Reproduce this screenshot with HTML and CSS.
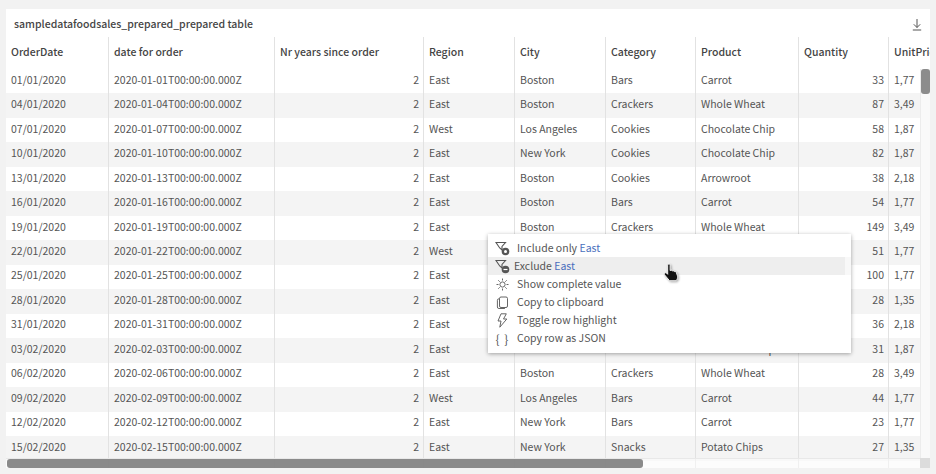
FILE: index.html
```
<!DOCTYPE html>
<html lang="en">
<head>
<meta charset="utf-8">
<title>sampledatafoodsales_prepared_prepared table</title>
<link rel="stylesheet" href="styles.css">
</head>
<body>
<section class="card">
  <header class="card-head">
    <h1 class="card-title">sampledatafoodsales_prepared_prepared table</h1>
    <svg class="download" viewBox="0 0 12 13" width="12" height="13"><path d="M6 1v8.500M2.800 6.300 6 9.500l3.200-3.200M1.800 12h8.400" fill="none" stroke="#555" stroke-width="1"/></svg>
  </header>
  <div class="table-wrap">
    <table class="data">
      <colgroup><col class="c1"><col class="c2"><col class="c3"><col class="c4"><col class="c5"><col class="c6"><col class="c7"><col class="c8"><col class="c9"></colgroup>
      <thead><tr><th>OrderDate</th><th>date for order</th><th>Nr years since order</th><th>Region</th><th>City</th><th>Category</th><th>Product</th><th>Quantity</th><th>UnitPrice</th></tr></thead>
      <tbody>
        <tr><td>01/01/2020</td><td>2020-01-01T00:00:00.000Z</td><td class="n">2</td><td>East</td><td>Boston</td><td>Bars</td><td>Carrot</td><td class="n">33</td><td>1,77</td></tr>
        <tr><td>04/01/2020</td><td>2020-01-04T00:00:00.000Z</td><td class="n">2</td><td>East</td><td>Boston</td><td>Crackers</td><td>Whole Wheat</td><td class="n">87</td><td>3,49</td></tr>
        <tr><td>07/01/2020</td><td>2020-01-07T00:00:00.000Z</td><td class="n">2</td><td>West</td><td>Los Angeles</td><td>Cookies</td><td>Chocolate Chip</td><td class="n">58</td><td>1,87</td></tr>
        <tr><td>10/01/2020</td><td>2020-01-10T00:00:00.000Z</td><td class="n">2</td><td>East</td><td>New York</td><td>Cookies</td><td>Chocolate Chip</td><td class="n">82</td><td>1,87</td></tr>
        <tr><td>13/01/2020</td><td>2020-01-13T00:00:00.000Z</td><td class="n">2</td><td>East</td><td>Boston</td><td>Cookies</td><td>Arrowroot</td><td class="n">38</td><td>2,18</td></tr>
        <tr><td>16/01/2020</td><td>2020-01-16T00:00:00.000Z</td><td class="n">2</td><td>East</td><td>Boston</td><td>Bars</td><td>Carrot</td><td class="n">54</td><td>1,77</td></tr>
        <tr><td>19/01/2020</td><td>2020-01-19T00:00:00.000Z</td><td class="n">2</td><td>East</td><td>Boston</td><td>Crackers</td><td>Whole Wheat</td><td class="n">149</td><td>3,49</td></tr>
        <tr><td>22/01/2020</td><td>2020-01-22T00:00:00.000Z</td><td class="n">2</td><td>West</td><td>Los Angeles</td><td>Bars</td><td>Carrot</td><td class="n">51</td><td>1,77</td></tr>
        <tr><td>25/01/2020</td><td>2020-01-25T00:00:00.000Z</td><td class="n">2</td><td>East</td><td>New York</td><td>Bars</td><td>Carrot</td><td class="n">100</td><td>1,77</td></tr>
        <tr><td>28/01/2020</td><td>2020-01-28T00:00:00.000Z</td><td class="n">2</td><td>East</td><td>New York</td><td>Snacks</td><td>Potato Chips</td><td class="n">28</td><td>1,35</td></tr>
        <tr><td>31/01/2020</td><td>2020-01-31T00:00:00.000Z</td><td class="n">2</td><td>East</td><td>Boston</td><td>Cookies</td><td>Arrowroot</td><td class="n">36</td><td>2,18</td></tr>
        <tr><td>03/02/2020</td><td>2020-02-03T00:00:00.000Z</td><td class="n">2</td><td>East</td><td>New York</td><td>Cookies</td><td>Chocolate Chip</td><td class="n">31</td><td>1,87</td></tr>
        <tr><td>06/02/2020</td><td>2020-02-06T00:00:00.000Z</td><td class="n">2</td><td>East</td><td>Boston</td><td>Crackers</td><td>Whole Wheat</td><td class="n">28</td><td>3,49</td></tr>
        <tr><td>09/02/2020</td><td>2020-02-09T00:00:00.000Z</td><td class="n">2</td><td>West</td><td>Los Angeles</td><td>Bars</td><td>Carrot</td><td class="n">44</td><td>1,77</td></tr>
        <tr><td>12/02/2020</td><td>2020-02-12T00:00:00.000Z</td><td class="n">2</td><td>East</td><td>New York</td><td>Bars</td><td>Carrot</td><td class="n">23</td><td>1,77</td></tr>
        <tr><td>15/02/2020</td><td>2020-02-15T00:00:00.000Z</td><td class="n">2</td><td>East</td><td>New York</td><td>Snacks</td><td>Potato Chips</td><td class="n">27</td><td>1,35</td></tr>
        <tr class="filler"><td></td><td></td><td></td><td></td><td></td><td></td><td></td><td></td><td></td></tr>
      </tbody>
    </table>
    <div class="vtrack"><div class="vthumb"></div></div>
    <div class="htrack"><div class="hthumb"></div></div>
    <div class="corner"></div>
  </div>
</section>

<ul class="menu">
  <li class="item">
    <svg class="ico" viewBox="0 0 15 15"><path d="M1 1.500h9.500L7 5.500v3.500L4.700 7Z" fill="none" stroke="#555" stroke-width="1.100"/><circle cx="10.500" cy="10.500" r="3.800" fill="#555"/><circle cx="10.500" cy="10.500" r="1.500" fill="#fff"/></svg>
    <span>Include only <em class="val">East</em></span>
  </li>
  <li class="item hover">
    <svg class="ico" viewBox="0 0 15 15"><path d="M1 1.500h9.500L7 5.500v3.500L4.700 7Z" fill="none" stroke="#555" stroke-width="1.100"/><circle cx="10.500" cy="10.500" r="3.800" fill="#555"/><path d="M8.500 10.500h4" stroke="#fff" stroke-width="1.200"/></svg>
    <span class="shift">Exclude <em class="val">East</em></span>
  </li>
  <li class="item">
    <svg class="ico" viewBox="0 0 15 15"><circle cx="7.500" cy="7.500" r="2.600" fill="none" stroke="#555" stroke-width=".9"/><path d="M7.500 1.500v2M7.500 11.500v2M1.500 7.500h2M11.500 7.500h2M3.300 3.300l1.400 1.400M10.300 10.300l1.400 1.400M3.300 11.700l1.400-1.400M10.300 4.700l1.400-1.400" stroke="#555" stroke-width=".9"/></svg>
    <span>Show complete value</span>
  </li>
  <li class="item">
    <svg class="ico" viewBox="0 0 15 15"><rect x="4.500" y="2" width="8" height="10.500" rx="1.500" fill="none" stroke="#555" stroke-width=".9"/><path d="M4.500 3.800h-.6A1.500 1.500 0 0 0 2.400 5.300v6.700a1.500 1.500 0 0 0 1.500 1.500h6" fill="none" stroke="#555" stroke-width=".9"/></svg>
    <span>Copy to clipboard</span>
  </li>
  <li class="item">
    <svg class="ico" viewBox="0 0 15 15"><path d="M6 .8 3 8h3L4.800 14.200 11.800 6H8.500L11.300.8Z" fill="none" stroke="#555" stroke-width=".9" stroke-linejoin="round"/></svg>
    <span>Toggle row highlight</span>
  </li>
  <li class="item">
    <span class="ico braces">{ }</span>
    <span>Copy row as JSON</span>
  </li>
</ul>

<svg class="cursor" viewBox="0 0 18 20" width="18" height="20"><path d="M5.200 1.300c.9-.6 1.900 0 1.900 1v5.200l.9-.3c.7-.2 1.300.1 1.600.7.700-.3 1.500 0 1.800.7.800-.3 1.600.1 1.900.8l1.100 3.300c.4 1.300.2 2.700-.5 3.800l-.7 1.200H6.500L1.700 12c-.6-.7-.5-1.600.2-2 .6-.4 1.300-.2 1.800.3l1 1V2.300c0-.4.100-.8.500-1Z" fill="#111" stroke="#fff" stroke-width=".9"/></svg>
</body>
</html>
```
FILE: styles.css
```
* { box-sizing: border-box; }
html, body { margin: 0; height: 100%; }
body {
  width: 936px;
  height: 474px;
  overflow: hidden;
  background: #f2f2f2;
  padding: 9px 6px 6px;
  font-family: "Noto Sans CJK SC", "Noto Sans", sans-serif;
  font-size: 10.5px;
  color: #555;
  position: relative;
}
.card {
  width: 924px;
  height: 459px;
  background: #fff;
  display: flex;
  flex-direction: column;
}
.card-head {
  flex: 0 0 28px;
  display: flex;
  align-items: center;
  justify-content: space-between;
  padding: 0 7px 0 8px;
}
.card-title { margin: 0; font-size: 10.5px; font-weight: 500; color: #444; }
.download { display: block; margin-top: 3px; }
.table-wrap { position: relative; flex: 1; overflow: hidden; }
.data {
  table-layout: fixed;
  width: 965px;
  border-collapse: separate;
  border-spacing: 0;
}
.c1 { width: 103px; }
.c2 { width: 166px; }
.c3 { width: 149px; }
.c4 { width: 91px; }
.c5 { width: 91px; }
.c6 { width: 90px; }
.c7 { width: 103px; }
.c8 { width: 90px; }
.c9 { width: 82px; }
th, td {
  padding: 0 5px;
  border-right: 1px solid #e2e2e2;
  text-align: left;
  white-space: nowrap;
  overflow: hidden;
  line-height: 16px;
}
th { height: 32px; padding-bottom: 3px; font-weight: 500; color: #444; }
td { height: 24.47px; padding-bottom: 3px; }
td.n { text-align: right; padding-right: 4px; }
tbody tr:nth-child(even) td { background: #f4f4f4; }
.filler td { height: 12px; background: #fff; }
.vtrack {
  position: absolute;
  right: 0;
  top: 32px;
  bottom: 10px;
  width: 10px;
  background: #f9f9f9;
  border-left: 1px solid #ececec;
}
.vthumb { width: 9px; height: 25px; border-radius: 3px; background: #8c8c8c; }
.htrack {
  position: absolute;
  left: 0;
  right: 10px;
  bottom: 0;
  height: 10px;
  background: rgba(250, 250, 250, .6);
  border-top: 1px solid #e8e8e8;
}
.hthumb { width: 636px; height: 9px; margin-left: 1px; border-radius: 3px; background: rgba(128, 128, 128, .92); }
.corner { position: absolute; right: 0; bottom: 0; width: 10px; height: 10px; background: #dcdcdc; }
.menu {
  position: absolute;
  left: 488px;
  top: 234px;
  width: 363px;
  height: 119px;
  margin: 0;
  padding: 5px 0;
  list-style: none;
  background: #fff;
  box-shadow: 0 1px 4px rgba(0, 0, 0, .35);
}
.item {
  height: 18px;
  display: flex;
  align-items: center;
  gap: 7px;
  padding: 0 0 0 7px;
  line-height: 16px;
}
.item.hover { background: linear-gradient(to right, #eee 357px, #f8f8f8 357px); }
.shift { margin-left: -3px; }
.ico { width: 15px; height: 15px; flex: none; display: block; }
.braces { text-align: center; font-size: 12px; line-height: 15px; letter-spacing: 1px; color: #555; }
.val { font-style: normal; color: #4a6fbd; }
.cursor { position: absolute; left: 663px; top: 263px; filter: drop-shadow(1px 1px 1px rgba(0, 0, 0, .35)); }
```
